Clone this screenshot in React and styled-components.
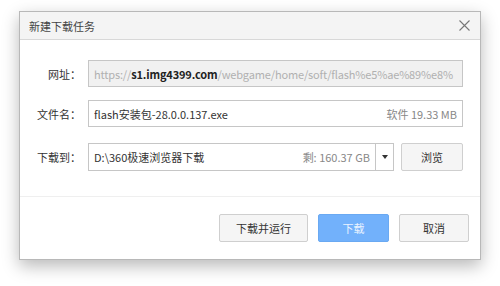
import React from "react";
import styled, { createGlobalStyle } from "styled-components";

const Global = createGlobalStyle`
  html, body { margin: 0; padding: 0; background: #fff; }
  body { font-family: "Noto Sans CJK SC", "Noto Sans", sans-serif; font-size: 11px; color: #333; }
`;

const Page = styled.div`
  padding: 11px 0 0 19px;
  width: 500px;
  height: 286px;
  box-sizing: border-box;
`;

const Dialog = styled.div`
  width: 462px;
  height: 249px;
  box-sizing: border-box;
  border: 1px solid #b8b8b8;
  background: #fff;
  box-shadow: 0 6px 16px rgba(0, 0, 0, 0.28);
  display: flex;
  flex-direction: column;
`;

const TitleBar = styled.div`
  height: 27px;
  flex: none;
  background: #f4f4f4;
  border-bottom: 1px solid #d8d8d8;
  display: flex;
  align-items: center;
  justify-content: space-between;
  padding: 0 10px 0 9px;
  color: #444;
`;

const Close = styled.svg`
  width: 11px;
  height: 11px;
`;

const Body = styled.div`
  padding: 20px 17px 0 0;
  display: flex;
  flex-direction: column;
  gap: 13px;
  height: 136px;
  box-sizing: border-box;
  flex: none;
`;

const Row = styled.div`
  display: flex;
  align-items: center;
  gap: 7px;
  margin-top: ${(p) => p.$mt || 0}px;
`;

const Label = styled.div`
  width: 61px;
  text-align: right;
  color: #333;
  flex: none;
`;

const Field = styled.div`
  flex: 1;
  min-width: 0;
  height: ${(p) => p.$h || 27}px;
  box-sizing: border-box;
  border: 1px solid #c6c6c6;
  background: ${(p) => (p.$disabled ? "#f1f1f1" : "#fff")};
  display: flex;
  align-items: center;
  padding: 0 5px;
  gap: 8px;
  overflow: hidden;
`;

const Value = styled.span`
  flex: 1;
  min-width: 0;
  white-space: nowrap;
  overflow: hidden;
  color: #333;
  letter-spacing: ${(p) => p.$tight ? "-0.15px" : "normal"};
`;

const Faint = styled.span`
  color: #b0b0b0;
`;

const Host = styled.span`
  color: #222;
  font-weight: bold;
`;

const Meta = styled.span`
  flex: none;
  color: #888;
  white-space: nowrap;
`;

const Combo = styled.div`
  flex: 1;
  display: flex;
  min-width: 0;
`;

const DropBtn = styled.div`
  width: 18px;
  height: 28px;
  box-sizing: border-box;
  border: 1px solid #c6c6c6;
  border-left: none;
  display: flex;
  align-items: center;
  justify-content: center;
  flex: none;
`;

const Caret = styled.div`
  width: 0;
  height: 0;
  border-left: 3.5px solid transparent;
  border-right: 3.5px solid transparent;
  border-top: 4px solid #333;
`;

const Button = styled.div`
  width: ${(p) => p.$w}px;
  height: 28px;
  box-sizing: border-box;
  border: 1px solid ${(p) => (p.$primary ? "#6aa9f2" : "#cfcfcf")};
  border-radius: 2px;
  background: ${(p) => (p.$primary ? "#72b1fb" : "#f5f5f5")};
  color: ${(p) => (p.$primary ? "#eaf3ff" : "#333")};
  display: flex;
  align-items: center;
  justify-content: center;
  flex: none;
`;

const Separator = styled.div`
  height: 1px;
  background: #efefef;
  margin-top: 20px;
`;

const Footer = styled.div`
  display: flex;
  justify-content: flex-end;
  gap: 10px;
  padding: 17px 11px 0 0;
`;

export default function App() {
  return (
    <>
      <Global />
      <Page>
        <Dialog>
          <TitleBar>
            <span>新建下载任务</span>
            <Close viewBox="0 0 11 11">
              <path d="M0.5 0.5 L10.5 10.5 M10.5 0.5 L0.5 10.5" stroke="#777" strokeWidth="1.1" fill="none" />
            </Close>
          </TitleBar>
          <Body>
            <Row>
              <Label>网址：</Label>
              <Field $disabled>
                <Value $tight>
                  <Faint>https://</Faint>
                  <Host>s1.img4399.com</Host>
                  <Faint>/webgame/home/soft/flash%e5%ae%89%e8%</Faint>
                </Value>
              </Field>
            </Row>
            <Row>
              <Label>文件名：</Label>
              <Field>
                <Value>flash安装包-28.0.0.137.exe</Value>
                <Meta>软件 19.33 MB</Meta>
              </Field>
            </Row>
            <Row $mt={3}>
              <Label>下载到：</Label>
              <Combo>
                <Field $h={28}>
                  <Value>D:\360极速浏览器下载</Value>
                  <Meta>剩: 160.37 GB</Meta>
                </Field>
                <DropBtn>
                  <Caret />
                </DropBtn>
              </Combo>
              <Button $w={62}>浏览</Button>
            </Row>
          </Body>
          <Separator />
          <Footer>
            <Button $w={89}>下载并运行</Button>
            <Button $w={71} $primary>下载</Button>
            <Button $w={70}>取消</Button>
          </Footer>
        </Dialog>
      </Page>
    </>
  );
}
